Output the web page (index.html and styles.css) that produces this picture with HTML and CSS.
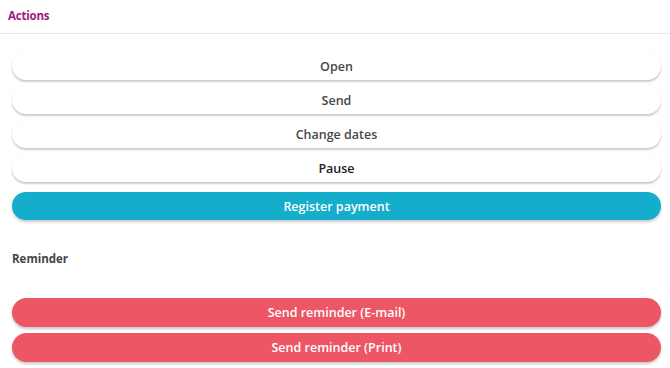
FILE: index.html
```html
<!DOCTYPE html>
<html>
<head>
<meta charset="utf-8">
<link rel="stylesheet" href="styles.css">
</head>
<body>
<div class="panel">
  <div class="panel-header"><h2 class="panel-title">Actions</h2></div>
  <div class="panel-body">
    <div class="btn-group">
      <button class="btn btn-white">Open</button>
      <button class="btn btn-white">Send</button>
      <button class="btn btn-white">Change dates</button>
      <button class="btn btn-white btn-dark">Pause</button>
      <button class="btn btn-cyan btn-primary-gap">Register payment</button>
    </div>
    <h3 class="section-label">Reminder</h3>
    <div class="btn-group">
      <button class="btn btn-red">Send reminder (E-mail)</button>
      <button class="btn btn-red">Send reminder (Print)</button>
    </div>
  </div>
</div>
</body>
</html>
```
FILE: styles.css
```css
* { box-sizing: border-box; }
html, body { margin: 0; padding: 0; background: #fff; }
body { font-family: "Open Sans", "Liberation Sans", sans-serif; width: 670px; height: 368px; overflow: hidden; }
.panel-header {
  height: 34px;
  border-bottom: 1px solid #e6e6e6;
  padding: 8px 8px 0 8px;
}
.panel-title {
  margin: 0;
  font-size: 11.5px;
  line-height: 16px;
  font-weight: 700;
  letter-spacing: -0.2px;
  color: #a0197d;
}
.panel-body {
  padding: 18px 9px 0 12px;
}
.btn-group {
  display: flex;
  flex-direction: column;
  gap: 6px;
}
.btn {
  display: block;
  width: 100%;
  height: 28px;
  border: none;
  border-radius: 14px;
  font-family: "Open Sans", "Liberation Sans", sans-serif;
  font-size: 12.5px;
  font-weight: 600;
  padding: 0;
  box-shadow: 0 2px 3px rgba(0,0,0,0.22);
}
.btn-white { background: #fff; color: #474747; box-shadow: 0 2px 2px rgba(0,0,0,0.2), 0 0 2px rgba(0,0,0,0.06); }
.btn-dark { color: #222; }
.btn-cyan { background: #15adcc; color: #fff; }
.btn-primary-gap { margin-top: 4px; }
.btn-red { background: #ec5665; color: #fff; height: 29px; border-radius: 15px; }
.section-label {
  margin: 0;
  padding: 31px 0 0 0;
  height: 78px;
  font-size: 11.5px;
  line-height: 16px;
  font-weight: 700;
  color: #444;
}
```
